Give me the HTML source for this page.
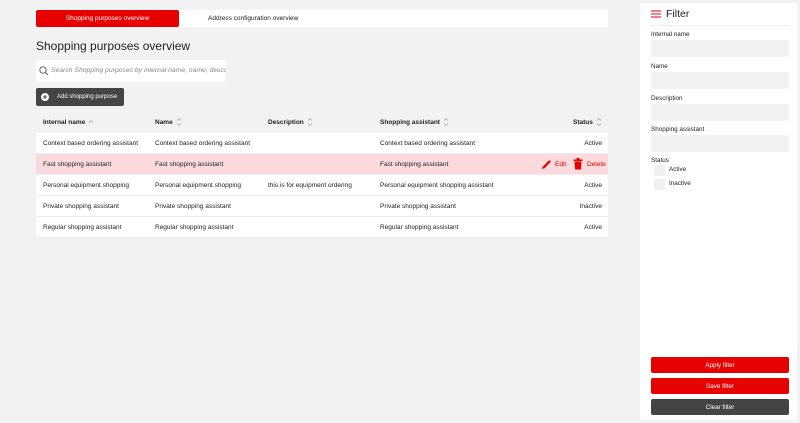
<!DOCTYPE html>
<html><head><style>
*{box-sizing:border-box;margin:0;padding:0}
body{width:800px;height:423px;background:#f2f2f2;font-family:"Liberation Sans",sans-serif;position:relative;overflow:hidden;color:#222}
.a{position:absolute}
.tab{top:10px;height:17px;font-size:6.5px;display:flex;align-items:center;justify-content:center}
.row{position:absolute;left:36px;width:572px;height:21px;background:#fff;border-bottom:1px solid #eee;font-size:6.5px}
.row span{position:absolute;top:7px}
.hd{position:absolute;top:117px;font-size:6.5px;font-weight:bold;display:flex;align-items:center;height:10px}
.hd svg{margin-left:3px}
.lbl{position:absolute;left:651px;font-size:6.3px}
.inp{position:absolute;left:651px;width:138px;height:17px;background:#f2f2f2;border-radius:2px}
.btn{position:absolute;left:651px;width:138px;height:16px;border-radius:2px;color:#fff;font-size:6.3px;display:flex;align-items:center;justify-content:center}
.cb{position:absolute;left:654px;width:11px;height:11px;background:#f0f0f0;border-radius:1px}
</style></head><body>
<div class="a tab" style="left:36px;width:143px;background:#e60000;color:#fff;border-radius:2px">Shopping purposes overview</div>
<div class="a tab" style="left:179px;width:429px;background:#fff;justify-content:flex-start;padding-left:29px">Address configuration overview</div>
<div class="a" style="left:36px;top:39px;font-size:12px">Shopping purposes overview</div>
<div class="a" style="left:36px;top:60px;width:190px;height:22px;background:#fff;border-radius:2px;overflow:hidden;white-space:nowrap">
<svg class="a" style="left:3px;top:6px" width="10" height="10" viewBox="0 0 10 10"><circle cx="4" cy="4" r="3.2" fill="none" stroke="#555" stroke-width="0.9"/><path d="M6.4 6.4L9 9" stroke="#555" stroke-width="0.9"/></svg>
<span class="a" style="left:15px;top:7px;font-size:6.8px;font-style:italic;color:#888">Search Shopping purposes by internal name, name, description</span></div>
<div class="a" style="left:36px;top:88px;width:88px;height:18px;background:#444;border-radius:2px;color:#fff;font-size:6px">
<div class="a" style="left:5px;top:5px;width:8px;height:8px;border-radius:50%;background:#fff"></div>
<svg class="a" style="left:5px;top:5px" width="8" height="8" viewBox="0 0 8 8"><path d="M4 2v4M2 4h4" stroke="#444" stroke-width="1"/></svg>
<span class="a" style="left:21px;top:6px">Add shopping purpose</span></div>
<div class="hd" style="left:43px">Internal name<svg width="6" height="10" viewBox="0 0 6 10"><path d="M1 5.5L3 3.5 5 5.5" fill="none" stroke="#999" stroke-width="0.6"/></svg></div>
<div class="hd" style="left:155px">Name<svg width="6" height="10" viewBox="0 0 6 10"><path d="M1 3.5L3 1.5 5 3.5M1 6.5L3 8.5 5 6.5" fill="none" stroke="#999" stroke-width="0.6"/></svg></div>
<div class="hd" style="left:268px">Description<svg width="6" height="10" viewBox="0 0 6 10"><path d="M1 3.5L3 1.5 5 3.5M1 6.5L3 8.5 5 6.5" fill="none" stroke="#999" stroke-width="0.6"/></svg></div>
<div class="hd" style="left:380px">Shopping assistant<svg width="6" height="10" viewBox="0 0 6 10"><path d="M1 3.5L3 1.5 5 3.5M1 6.5L3 8.5 5 6.5" fill="none" stroke="#999" stroke-width="0.6"/></svg></div>
<div class="hd" style="left:573px">Status<svg width="6" height="10" viewBox="0 0 6 10"><path d="M1 3.5L3 1.5 5 3.5M1 6.5L3 8.5 5 6.5" fill="none" stroke="#999" stroke-width="0.6"/></svg></div>

<div class="row" style="top:133px"><span style="left:7px">Context based ordering assistant</span><span style="left:119px">Context based ordering assistant</span><span style="left:344px">Context based ordering assistant</span><span style="right:6px">Active</span></div>
<div class="row" style="top:154px;background:#fadadd"><span style="left:7px">Fast shopping assistant</span><span style="left:119px">Fast shopping assistant</span><span style="left:344px">Fast shopping assistant</span>
<svg class="a" style="left:505px;top:5px" width="11" height="11" viewBox="0 0 10 10"><path d="M1 9L1.5 7 7.5 1 9 2.5 3 8.5Z" fill="#e60000"/></svg>
<span style="left:519px;color:#e60000">Edit</span>
<svg class="a" style="left:537px;top:4px" width="10" height="12" viewBox="0 0 10 12"><rect x="0.5" y="1.5" width="9" height="1.5" fill="#e60000"/><rect x="3.5" y="0" width="3" height="2" fill="#e60000"/><path d="M1.5 3.5h7l-0.6 8h-5.8z" fill="#e60000"/></svg>
<span style="left:551px;color:#e60000">Delete</span></div>
<div class="row" style="top:175px"><span style="left:7px">Personal equipment shopping</span><span style="left:119px">Personal equipment shopping</span><span style="left:232px">this is for equipment ordering</span><span style="left:344px">Personal equipment shopping assistant</span><span style="right:6px">Active</span></div>
<div class="row" style="top:196px"><span style="left:7px">Private shopping assistant</span><span style="left:119px">Private shopping assistant</span><span style="left:344px">Private shopping assistant</span><span style="right:6px">Inactive</span></div>
<div class="row" style="top:217px"><span style="left:7px">Regular shopping assistant</span><span style="left:119px">Regular shopping assistant</span><span style="left:344px">Regular shopping assistant</span><span style="right:6px">Active</span></div>

<div class="a" style="left:640px;top:3px;width:157px;height:417px;background:#fff"></div>
<svg class="a" style="left:651px;top:10px" width="10" height="8" viewBox="0 0 10 8"><path d="M0 1h10M0 4h10M0 7h10" stroke="#e60000" stroke-width="1.1"/></svg>
<div class="a" style="left:666px;top:8px;font-size:10.5px">Filter</div>
<div class="a" style="left:651px;top:25px;width:138px;height:1px;background:#eee"></div>
<div class="lbl" style="top:31px">Internal name</div><div class="inp" style="top:40px"></div>
<div class="lbl" style="top:63px">Name</div><div class="inp" style="top:72px"></div>
<div class="lbl" style="top:95px">Description</div><div class="inp" style="top:104px"></div>
<div class="lbl" style="top:126px">Shopping assistant</div><div class="inp" style="top:135px"></div>
<div class="lbl" style="top:157px">Status</div>
<div class="cb" style="top:165px"></div><div class="lbl" style="left:669px;top:166px">Active</div>
<div class="cb" style="top:179px"></div><div class="lbl" style="left:669px;top:180px">Inactive</div>
<div class="btn" style="top:357px;background:#e60000">Apply filter</div>
<div class="btn" style="top:378px;background:#e60000">Save filter</div>
<div class="btn" style="top:399px;background:#444">Clear filter</div>
</body></html>
